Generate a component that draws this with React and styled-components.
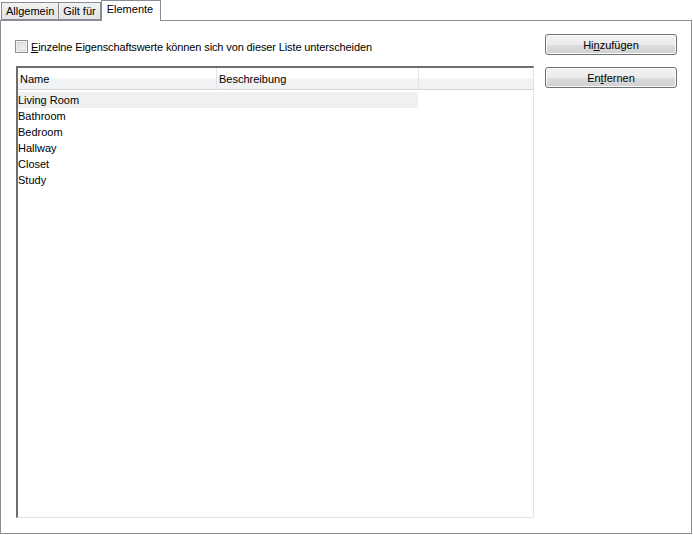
import React, { useState } from "react";
import styled, { createGlobalStyle } from "styled-components";

const GlobalStyle = createGlobalStyle`
  html, body {
    margin: 0;
    padding: 0;
    background: #fff;
  }
  body {
    font-family: Tahoma, "Liberation Sans", Arial, sans-serif;
    font-size: 11px;
    color: #000;
  }
`;

const Window = styled.div`
  width: 693px;
  height: 535px;
  background: #fff;
  display: flex;
  flex-direction: column;
`;

const TabStrip = styled.div`
  display: flex;
  align-items: flex-end;
  height: 20px;
  padding-left: 1px;
  position: relative;
  z-index: 1;
`;

const Tab = styled.div`
  box-sizing: border-box;
  height: ${(p) => (p.$active ? "21px" : "18px")};
  margin-bottom: ${(p) => (p.$active ? "-1px" : "0")};
  padding: ${(p) => (p.$active ? "2px 7px 0 5px" : "2px 4px 0 4px")};
  border: 1px solid #898c95;
  border-bottom: ${(p) => (p.$active ? "none" : "1px solid #898c95")};
  border-left: ${(p) => (p.$first || p.$active ? "1px solid #898c95" : "none")};
  background: ${(p) =>
    p.$active ? "#fff" : "linear-gradient(#f2f2f2, #e3e3e3)"};
  font-size: 11px;
  line-height: 13px;
  white-space: nowrap;
`;

const Panel = styled.div`
  box-sizing: border-box;
  flex: none;
  width: 692px;
  height: 514px;
  border: 1px solid #898c95;
  display: flex;
  padding: 13px 14px 0 14px;
  gap: 11px;
`;

const MainColumn = styled.div`
  display: flex;
  flex-direction: column;
  width: 519px;
`;

const CheckRow = styled.label`
  display: flex;
  align-items: center;
  gap: 3px;
  height: 19px;
  margin-top: 3px;
  letter-spacing: -0.12px;
`;

const CheckBox = styled.span`
  box-sizing: border-box;
  width: 13px;
  height: 13px;
  border: 1px solid #8f8f8f;
  background: linear-gradient(135deg, #dcdcdc, #f7f7f7);
  box-shadow: inset 0 0 0 1px #f4f4f4, inset 0 0 0 2px #d8d8d8;
  flex: none;
`;

const ListBox = styled.div`
  box-sizing: border-box;
  margin-top: 10px;
  margin-left: 1px;
  height: 452px;
  border-top: 2px solid #6e6e6e;
  border-left: 2px solid #6e6e6e;
  border-right: 1px solid #e3e3e3;
  border-bottom: 1px solid #e3e3e3;
  display: flex;
  flex-direction: column;
`;

const HeaderRow = styled.div`
  display: flex;
  height: 21px;
  background: linear-gradient(#ffffff 0%, #ffffff 45%, #f1f2f4 55%, #f1f2f4 100%);
  border-bottom: 1px solid #d5d5d5;
`;

const HeaderCell = styled.div`
  box-sizing: border-box;
  width: ${(p) => p.$w}px;
  flex: ${(p) => (p.$grow ? "1" : "none")};
  padding-left: 2px;
  line-height: 22px;
  border-right: ${(p) => (p.$grow ? "none" : "1px solid #e3e4e6")};
`;

const Rows = styled.div`
  padding-top: 2px;
  display: flex;
  flex-direction: column;
`;

const Row = styled.div`
  width: 400px;
  height: 16px;
  line-height: 16px;
  padding-left: 0;
  background: ${(p) => (p.$selected ? "#f0f0f0" : "transparent")};
`;

const ButtonColumn = styled.div`
  display: flex;
  flex-direction: column;
  gap: 12px;
`;

const Button = styled.button`
  box-sizing: border-box;
  width: 132px;
  height: 21px;
  border: 1px solid #707070;
  border-radius: 3px;
  background: linear-gradient(#f2f2f2 0%, #ebebeb 50%, #dddddd 51%, #cfcfcf 100%);
  box-shadow: inset 0 0 0 1px #fcfcfc;
  font-family: inherit;
  font-size: 11px;
  color: #000;
  padding: 0;
`;

const Key = styled.span`
  text-decoration: underline;
`;

const rooms = ["Living Room", "Bathroom", "Bedroom", "Hallway", "Closet", "Study"];

export default function App() {
  const [selected] = useState(0);
  return (
    <>
      <GlobalStyle />
      <Window>
        <TabStrip>
          <Tab $first>Allgemein</Tab>
          <Tab>Gilt für</Tab>
          <Tab $active>Elemente</Tab>
        </TabStrip>
        <Panel>
          <MainColumn>
            <CheckRow>
              <CheckBox />
              <span>
                <Key>E</Key>inzelne Eigenschaftswerte können sich von dieser Liste unterscheiden
              </span>
            </CheckRow>
            <ListBox>
              <HeaderRow>
                <HeaderCell $w={199}>Name</HeaderCell>
                <HeaderCell $w={202}>Beschreibung</HeaderCell>
                <HeaderCell $grow />
              </HeaderRow>
              <Rows>
                {rooms.map((r, i) => (
                  <Row key={r} $selected={i === selected}>
                    {r}
                  </Row>
                ))}
              </Rows>
            </ListBox>
          </MainColumn>
          <ButtonColumn>
            <Button>
              Hi<Key>n</Key>zufügen
            </Button>
            <Button>
              En<Key>t</Key>fernen
            </Button>
          </ButtonColumn>
        </Panel>
      </Window>
    </>
  );
}
